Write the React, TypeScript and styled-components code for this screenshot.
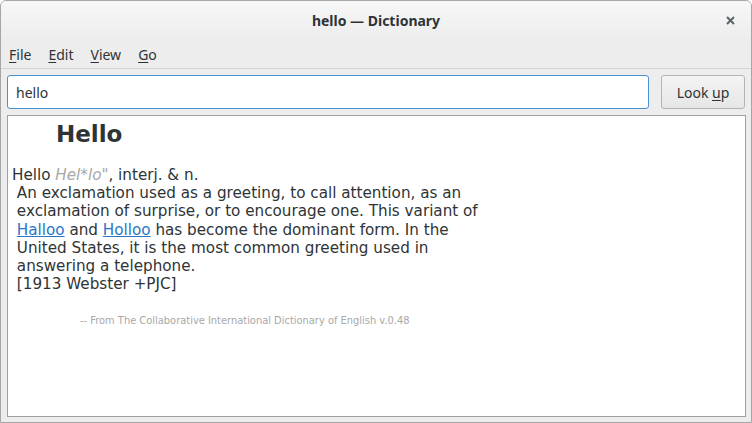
import * as React from 'react'
import styled, { createGlobalStyle } from 'styled-components'

const GlobalStyle = createGlobalStyle`
  html, body {
    margin: 0;
    padding: 0;
    background: #ffffff;
  }
`

const Window = styled.div`
  box-sizing: border-box;
  width: 752px;
  height: 423px;
  display: flex;
  flex-direction: column;
  border: 1px solid #a6a6a6;
  border-radius: 6px 6px 0 0;
  background: #ededed;
  overflow: hidden;
  font-family: 'Noto Sans', 'DejaVu Sans', sans-serif;
  color: #2e3436;
`

const TitleBar = styled.div`
  height: 38px;
  display: grid;
  grid-template-columns: 1fr auto 1fr;
  align-items: center;
  background: linear-gradient(to bottom, #f7f7f7, #ededed);
`

const Title = styled.div`
  grid-column: 2;
  font-weight: bold;
  font-size: 14px;
  color: #2e3436;
`

const CloseButton = styled.div`
  justify-self: end;
  margin-right: 14px;
  width: 14px;
  height: 14px;
  display: flex;
  align-items: center;
  justify-content: center;
`

const MenuBar = styled.div`
  box-sizing: border-box;
  height: 30px;
  display: flex;
  align-items: center;
  gap: 17px;
  padding: 2px 8px 0;
  border-bottom: 1px solid #d4d4d4;
  font-size: 14px;
`

const MenuItem = styled.span`
  color: #2e3436;
  u {
    text-decoration-thickness: 1px;
    text-underline-offset: 2px;
  }
`

const Toolbar = styled.div`
  display: flex;
  gap: 12px;
  padding: 6px;
`

const Entry = styled.div`
  box-sizing: border-box;
  flex: 1;
  height: 34px;
  border: 1px solid #4a90d9;
  border-radius: 3px;
  background: #ffffff;
  display: flex;
  align-items: center;
  padding: 0 8px;
  font-size: 14px;
  color: #2e3436;
`

const Button = styled.div`
  box-sizing: border-box;
  width: 84px;
  height: 34px;
  border: 1px solid #b4b4b4;
  border-radius: 3px;
  background: linear-gradient(to bottom, #f4f4f4, #e6e6e6);
  display: flex;
  align-items: center;
  justify-content: center;
  font-size: 14px;
  color: #2e3436;
  u {
    text-decoration-thickness: 1px;
    text-underline-offset: 2px;
  }
`

const Content = styled.div`
  box-sizing: border-box;
  flex: 1;
  margin: 0 5px 5px 6px;
  border: 1px solid #a0a0a0;
  background: #ffffff;
  padding: 3px 4px;
  font-family: 'DejaVu Sans', sans-serif;
  color: #2e3436;
`

const Headword = styled.h1`
  margin: 0 0 0 44px;
  font-size: 23px;
  line-height: 30px;
  font-weight: bold;
`

const Definition = styled.div`
  margin-top: 17px;
  white-space: pre;
  font-size: 15.2px;
  line-height: 18.2px;
`

const Pron = styled.span<{ $italic?: boolean }>`
  color: #a8a8a8;
  font-style: ${(p) => (p.$italic ? 'italic' : 'normal')};
`

const Link = styled.a`
  color: #2a76c6;
  text-decoration: underline;
`

const Source = styled.div`
  margin: 22px 0 0 68px;
  font-size: 9.9px;
  color: #a8a8a8;
`

export default function App() {
  return (
    <>
      <GlobalStyle />
      <Window>
        <TitleBar>
          <Title>hello — Dictionary</Title>
          <CloseButton>
            <svg width="9" height="9" viewBox="0 0 9 9">
              <path d="M1 1 L8 8 M8 1 L1 8" stroke="#5d6467" strokeWidth="2" />
            </svg>
          </CloseButton>
        </TitleBar>
        <MenuBar>
          <MenuItem><u>F</u>ile</MenuItem>
          <MenuItem><u>E</u>dit</MenuItem>
          <MenuItem><u>V</u>iew</MenuItem>
          <MenuItem><u>G</u>o</MenuItem>
        </MenuBar>
        <Toolbar>
          <Entry>hello</Entry>
          <Button>
            <span>
              Look <u>u</u>p
            </span>
          </Button>
        </Toolbar>
        <Content>
          <Headword>Hello</Headword>
          <Definition>
            {'Hello '}
            <Pron $italic>Hel*lo</Pron>
            <Pron>"</Pron>
            {', interj. & n.\n'}
            {' An exclamation used as a greeting, to call attention, as an\n'}
            {' exclamation of surprise, or to encourage one. This variant of\n '}
            <Link>Halloo</Link>
            {' and '}
            <Link>Holloo</Link>
            {' has become the dominant form. In the\n'}
            {' United States, it is the most common greeting used in\n'}
            {' answering a telephone.\n'}
            {' [1913 Webster +PJC]'}
          </Definition>
          <Source>-- From The Collaborative International Dictionary of English v.0.48</Source>
        </Content>
      </Window>
    </>
  )
}
